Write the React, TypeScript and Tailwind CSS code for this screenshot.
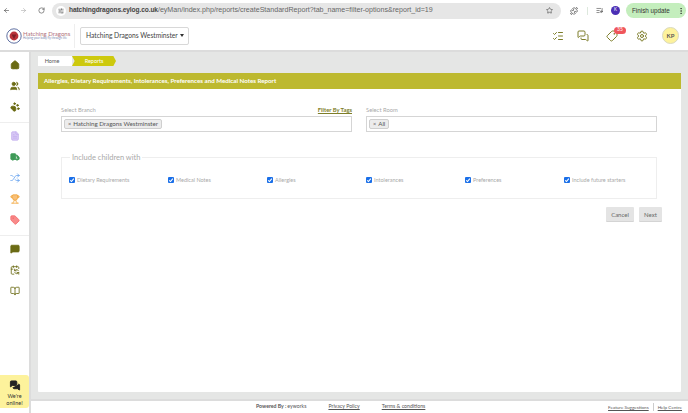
import { ArrowLeft, ArrowRight, RotateCw, SlidersHorizontal, Star, Puzzle, ListChecks, MessagesSquare, Settings, Home, Users, PawPrint, FileText, Truck, Shuffle, Trophy, Tag, MessageSquare, CalendarSync, BookOpen, EllipsisVertical, ListMusic, MessagesSquare as Chat } from "lucide-react";

const options = ["Dietary Requirements", "Medical Notes", "Allergies", "Intolerances", "Preferences", "Include future starters"];

function Check({ label }: { label: string }) {
  return (
    <label className="flex items-center gap-[2px] whitespace-nowrap text-[5.5px] text-[#a9a9a9]">
      <span className="flex h-[6px] w-[6px] items-center justify-center rounded-[1px] bg-[#1a6fe8]">
        <svg viewBox="0 0 10 10" className="h-[6px] w-[6px]">
          <path d="M2 5.5 L4.2 7.5 L8 2.8" fill="none" stroke="white" strokeWidth="1.8" />
        </svg>
      </span>
      {label}
    </label>
  );
}

function Pill({ label }: { label: string }) {
  return (
    <span className="flex h-[10px] items-center gap-[2px] rounded-[2px] border border-[#cfcfcf] bg-[#ececec] px-[3px] text-[6.2px] text-[#555]">
      <span className="text-[5.5px]">×</span>
      {label}
    </span>
  );
}

export default function App() {
  return (
    <div className="flex h-[413px] w-[688px] flex-col overflow-hidden bg-white font-['Lato',sans-serif]">
      {/* browser bar */}
      <div className="flex h-[21px] shrink-0 items-center bg-white pl-[3px] font-['Liberation_Sans',sans-serif]">
        <ArrowLeft className="h-[7px] w-[7px] text-[#444]" />
        <ArrowRight className="ml-[10px] h-[7px] w-[7px] text-[#aaa]" />
        <RotateCw className="ml-[11px] h-[7px] w-[7px] text-[#444]" />
        <div className="ml-[7px] flex h-[16px] w-[509px] items-center rounded-full bg-[#e6e6e6] pl-[4px] pr-[8px]">
          <span className="flex h-[10px] w-[10px] items-center justify-center rounded-full bg-white">
            <SlidersHorizontal className="h-[6px] w-[6px] text-[#444]" />
          </span>
          <span className="ml-[3px] flex-1 whitespace-nowrap text-[7.1px] text-[#666]">
            <span className="text-[6.6px] font-bold tracking-[-0.1px] text-[#444]">hatchingdragons.eylog.co.uk</span>/eyMan/index.php/reports/createStandardReport?tab_name=filter-options&amp;report_id=19
          </span>
          <Star className="h-[7px] w-[7px] text-[#444]" />
        </div>
        <Puzzle className="ml-[9px] h-[8px] w-[8px] text-[#333]" />
        <span className="ml-[9px] h-[8px] w-px bg-[#dde8dd]" />
        <ListMusic className="ml-[8px] h-[7px] w-[7px] text-[#444]" />
        <span className="ml-[8px] flex h-[9px] w-[9px] items-center justify-center rounded-full bg-[#4b2fb5] text-[4.5px] text-white">K</span>
        <div className="ml-[6px] flex h-[15px] w-[60px] items-center justify-between rounded-full bg-[#c4eebd] pl-[6px] pr-[1px] text-[6.3px] text-[#333]">
          Finish update
          <EllipsisVertical className="h-[8px] w-[8px]" />
        </div>
      </div>

      {/* app header */}
      <header className="flex h-[31px] shrink-0 items-center border-b-2 border-[#dcdcdc] bg-white pl-[6px] pr-[9px]">
        <div className="flex w-[68px] items-center gap-[1px]">
          <svg viewBox="0 0 20 20" className="h-[16px] w-[16px] shrink-0">
            <circle cx="10" cy="10" r="9" fill="white" stroke="#3a4f8c" strokeWidth="1" />
            <circle cx="10" cy="10" r="5.5" fill="#b9323a" />
            <path d="M7 8 L10 14 L13 8 Z" fill="#7c1f27" />
          </svg>
          <div className="leading-none">
            <div className="whitespace-nowrap text-[6px] text-[#b0707c]">Hatching Dragons</div>
            <div className="whitespace-nowrap text-[3px] text-[#7a88b0]">Helping your baby fly through life</div>
          </div>
        </div>
        <span className="h-[24px] w-px bg-[#eeeeee]" />
        <div className="ml-[5px] flex h-[18px] w-[109px] items-center justify-between rounded-[2px] border border-[#d8d8d8] pl-[5px] pr-[4px] text-[6.7px] text-[#444]">
          <span className="whitespace-nowrap">Hatching Dragons Westminster</span>
          <span className="h-0 w-0 border-x-[2.5px] border-t-[3px] border-x-transparent border-t-[#333]" />
        </div>
        <div className="ml-auto flex items-center">
          <ListChecks className="h-[12px] w-[12px] text-[#7c7c28]" />
          <MessagesSquare className="ml-[13px] h-[12px] w-[12px] text-[#7c7c28]" />
          <div className="relative ml-[17px]">
            <Tag className="h-[12px] w-[12px] rotate-90 text-[#7c7c28]" />
            <span className="absolute left-[8px] top-[-3px] flex h-[7px] w-[12px] items-center justify-center rounded-full bg-[#f0555b] text-[5px] text-white">35</span>
          </div>
          <Settings className="ml-[18px] h-[12px] w-[12px] text-[#7c7c28]" />
          <span className="ml-[14px] flex h-[17px] w-[17px] items-center justify-center rounded-full border border-[#d9d9c0] bg-[#fdf29c] text-[6px] font-bold text-[#555]">KP</span>
        </div>
      </header>

      <div className="flex min-h-0 flex-1">
        {/* sidebar */}
        <aside className="flex w-[31px] shrink-0 flex-col border-r-2 border-[#dcdcdc] bg-white">
          <div className="flex flex-col items-center gap-[11px] border-b border-[#eeeeee] pb-[10px] pt-[8px]">
            <Home className="h-[10px] w-[10px] fill-[#6b6b14] text-[#6b6b14]" />
            <Users className="h-[10px] w-[10px] fill-[#6b6b14] text-[#6b6b14]" />
            <PawPrint className="h-[10px] w-[10px] fill-[#6b6b14] text-[#6b6b14]" />
          </div>
          <div className="flex flex-col items-center gap-[11px] border-b border-[#eeeeee] pb-[10px] pt-[8px]">
            <FileText className="h-[10px] w-[10px] fill-[#d8c8f5] text-[#c4b0ee]" />
            <Truck className="h-[10px] w-[10px] fill-[#3f9a58] text-[#3f9a58]" />
            <Shuffle className="h-[10px] w-[10px] text-[#6aa5ef]" />
            <Trophy className="h-[10px] w-[10px] fill-[#f7c07a] text-[#f2a63c]" />
            <Tag className="h-[10px] w-[10px] fill-[#f88a8a] text-[#f46a6a]" />
          </div>
          <div className="flex flex-col items-center gap-[11px] pt-[8px]">
            <MessageSquare className="h-[10px] w-[10px] fill-[#6b6b14] text-[#6b6b14]" />
            <CalendarSync className="h-[10px] w-[10px] text-[#6b6b14]" />
            <BookOpen className="h-[10px] w-[10px] text-[#6b6b14]" />
          </div>
          <div className="mb-[5px] mt-auto flex h-[33px] w-[29px] flex-col items-center rounded-r-[3px] bg-[#fdf29c] pt-[5px] text-center text-[5.5px] leading-[6.5px] text-[#333]">
            <Chat className="mb-[2px] h-[11px] w-[12px] fill-[#222] text-[#222]" />
            We're
            <br />
            online!
          </div>
        </aside>

        <div className="flex min-w-0 flex-1 flex-col">
          {/* main */}
          <main className="flex min-h-0 flex-1 flex-col border-b-2 border-[#dcdcdc] bg-[#e5e6e5] pb-[7px] pl-[7px] pr-[7px] pt-[4px]">
            <div className="flex h-[10px] items-center text-[5.5px]">
              <span className="flex h-full w-[34px] items-center justify-center bg-white pr-[6px] text-[#555]">Home</span>
              <span className="flex h-full w-[44px] items-center justify-center bg-[#cdc90d] text-white [clip-path:polygon(0_0,94%_0,100%_50%,94%_100%,0_100%,6%_50%)]">Reports</span>
            </div>
            <section className="mt-[7px] flex min-h-0 flex-1 flex-col rounded-[1px] bg-white">
              <h1 className="flex h-[16px] shrink-0 items-center bg-[#bdb92f] pl-[6px] text-[6.2px] font-bold text-white">
                Allergies, Dietary Requirements, Intolerances, Preferences and Medical Notes Report
              </h1>
              <div className="pl-[23px] pr-[19px] pt-[16px]">
                <div className="mr-[5px] flex gap-[14px]">
                  <div className="w-[291px]">
                    <div className="flex h-[10px] items-end justify-between text-[5.8px] text-[#a9a9a9]">
                      <span>Select Branch</span>
                      <span className="font-bold text-[#7d7d28] underline">Filter By Tags</span>
                    </div>
                    <div className="mt-[1px] flex h-[16px] items-center border border-[#d5d5d5] pl-[2px]">
                      <Pill label="Hatching Dragons Westminster" />
                    </div>
                  </div>
                  <div className="w-[291px]">
                    <div className="flex h-[10px] items-end text-[5.8px] text-[#a9a9a9]">
                      <span>Select Room</span>
                    </div>
                    <div className="mt-[1px] flex h-[16px] items-center border border-[#d5d5d5] pl-[2px]">
                      <Pill label="All" />
                    </div>
                  </div>
                </div>
                <fieldset className="mr-[5px] mt-[20px] h-[47px] min-w-0 border border-[#eeeeee] pl-[7px]">
                  <legend className="ml-[1px] px-[2px] text-[7.5px] text-[#a9a9a9]">Include children with</legend>
                  <div className="mt-[13px] grid grid-cols-[repeat(6,99px)]">
                    {options.map((o) => (
                      <Check key={o} label={o} />
                    ))}
                  </div>
                </fieldset>
                <div className="mt-[8px] flex justify-end gap-[5px] text-[6px] text-[#666]">
                  <button className="h-[14px] w-[28px] rounded-[1px] bg-[#e4e4e4] shadow-[0_1px_0_#d4d4d4]">Cancel</button>
                  <button className="h-[14px] w-[23px] rounded-[1px] bg-[#e4e4e4] shadow-[0_1px_0_#d4d4d4]">Next</button>
                </div>
              </div>
            </section>
          </main>
          {/* footer */}
          <footer className="flex h-[12px] shrink-0 items-center bg-white pl-[225px] pr-[6px] text-[5.2px] text-[#555]">
            <span className="font-bold">Powered By :</span>
            <span className="ml-[1px]">eyworks</span>
            <span className="ml-[22px] underline">Privacy Policy</span>
            <span className="ml-[22px] underline">Terms &amp; conditions</span>
            <span className="ml-auto text-[4.6px] underline">Feature Suggestions</span>
            <span className="mx-[4px] h-[8px] w-px bg-[#ccc]" />
            <span className="text-[4.6px] underline">Help Centre</span>
          </footer>
        </div>
      </div>
    </div>
  );
}
